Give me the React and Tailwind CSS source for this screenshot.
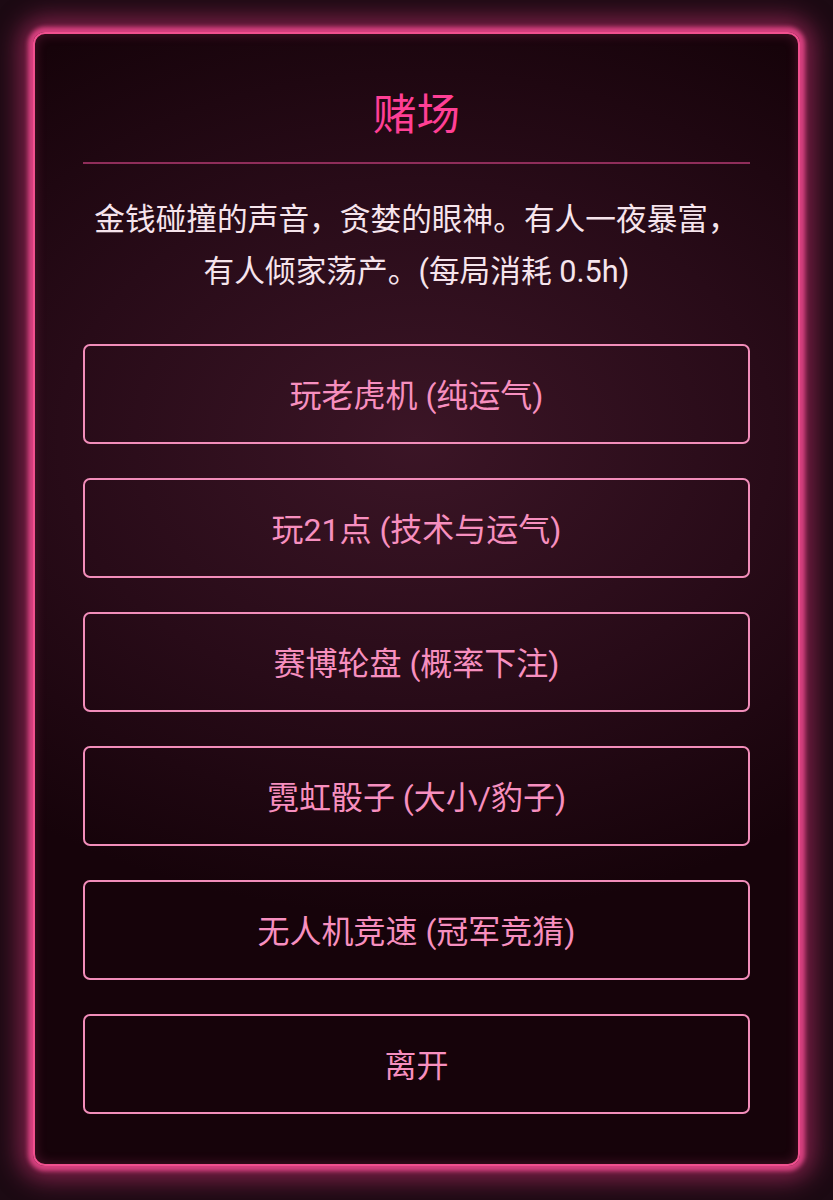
const GAMES = [
  "玩老虎机 (纯运气)",
  "玩21点 (技术与运气)",
  "赛博轮盘 (概率下注)",
  "霓虹骰子 (大小/豹子)",
  "无人机竞速 (冠军竞猜)",
  "离开",
];

const CasinoPanel = () => (
  <div className="rounded-[12px] border-2 border-[#f0508f] bg-[radial-gradient(ellipse_85%_42%_at_50%_36%,#3b1526_0%,#280b18_55%,#16030a_100%)] px-[48px] pt-[50px] pb-[50px] shadow-[0_0_4px_5px_rgba(232,71,138,0.85),0_0_24px_14px_rgba(214,52,120,0.55),inset_0_0_12px_rgba(236,72,140,0.25)]">
    <div className="border-b-2 border-[#8f2d5a] pb-[15px]">
      <h1 className="text-center text-[43.5px] leading-[63px] font-normal text-[#ff3f95]">赌场</h1>
    </div>
    <p className="mt-[30px] text-center text-[30.7px] leading-[52px] text-[#f6e4ec]">
      金钱碰撞的声音，贪婪的眼神。有人一夜暴富，
      <br />
      有人倾家荡产。(每局消耗 0.5h)
    </p>
    <div className="mt-[46px] flex flex-col gap-[34px]">
      {GAMES.map((label) => (
        <button
          key={label}
          type="button"
          className="h-[100px] w-full rounded-[7px] border-2 border-[#f28dba] bg-transparent pt-[3px] text-[32px] text-[#f78fbf]"
        >
          {label}
        </button>
      ))}
    </div>
  </div>
);

export default function App() {
  return (
    <div className="min-h-[1200px] bg-[#1c0a13] p-[33px] pt-[32px] font-['Roboto','Noto_Sans_CJK_SC',sans-serif]">
      <CasinoPanel />
    </div>
  );
}
